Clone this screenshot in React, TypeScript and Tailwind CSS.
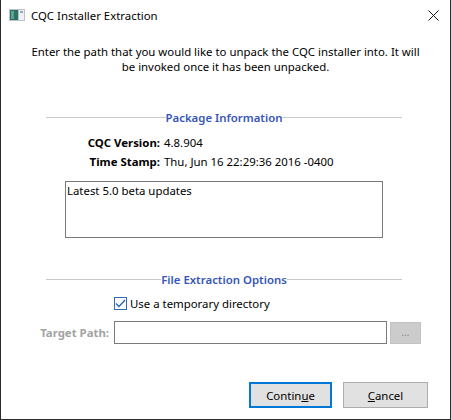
export default function App() {
  return (
    <div className="w-[451px] h-[420px] bg-white border-x border-b border-[#2b2b2b] flex flex-col font-['Noto_Sans',sans-serif] text-[11.4px] text-black leading-[15px]">
      {/* title bar */}
      <div className="h-[30px] flex items-center pl-[8px] pr-[11px]">
        <svg width="16" height="12" viewBox="0 0 16 12" className="mr-[6px]">
          <rect x="0" y="0" width="16" height="12" fill="#b9c2c6" />
          <rect x="1" y="1" width="8" height="10" fill="#2f6f66" />
          <rect x="2" y="2" width="3" height="8" fill="#5aa391" />
          <rect x="10" y="1" width="5" height="10" fill="#eef1f2" />
          <rect x="11" y="2" width="3" height="2" fill="#9aa6ac" />
        </svg>
        <span>CQC Installer Extraction</span>
        <svg width="11" height="11" viewBox="0 0 11 11" className="ml-auto">
          <path d="M0.5 0.5 L10.5 10.5 M10.5 0.5 L0.5 10.5" stroke="#111" strokeWidth="1" />
        </svg>
      </div>

      {/* intro */}
      <p className="mt-[14px] text-center leading-[15px]">
        Enter the path that you would like to unpack the CQC installer into. It will
        <br />
        be invoked once it has been unpacked.
      </p>

      {/* package information */}
      <div className="mt-[35px] ml-[45px] w-[356px] flex items-center h-[16px]">
        <div className="flex-1 h-px bg-[#c9c9c9]" />
        <span className="font-semibold text-[#3556b8]">Package Information</span>
        <div className="flex-1 h-px bg-[#c9c9c9]" />
      </div>

      <div className="mt-[8px] grid grid-cols-[159px_1fr] gap-x-[4px]">
        <div className="h-[19px] flex items-center justify-end font-bold">CQC Version:</div>
        <div className="h-[19px] flex items-center">4.8.904</div>
        <div className="h-[19px] flex items-center justify-end font-bold">Time Stamp:</div>
        <div className="h-[19px] flex items-center">Thu, Jun 16 22:29:36 2016 -0400</div>
      </div>

      <div className="mt-[10px] ml-[64px] w-[318px] h-[57px] border border-[#7a7a7a] px-[1px] pt-[1px]">
        Latest 5.0 beta updates
      </div>

      {/* file extraction options */}
      <div className="mt-[33px] ml-[45px] w-[356px] flex items-center h-[16px]">
        <div className="flex-1 h-px bg-[#c9c9c9]" />
        <span className="font-semibold text-[#3556b8]">File Extraction Options</span>
        <div className="flex-1 h-px bg-[#c9c9c9]" />
      </div>

      <div className="mt-[8px] ml-[113px] h-[16px] flex items-center gap-[3px]">
        <div className="w-[13px] h-[13px] border border-[#2f6fb8] flex items-center justify-center">
          <svg width="11" height="9" viewBox="0 0 11 9">
            <path d="M1 4.5 L4 7.5 L10 1" stroke="#2466b5" strokeWidth="1.3" fill="none" />
          </svg>
        </div>
        <span>Use a temporary directory</span>
      </div>

      <div className="mt-[10px] flex items-center h-[23px]">
        <span className="w-[108px] text-right font-bold text-[#a3a3a3]">Target Path:</span>
        <div className="ml-[5px] w-[273px] h-[23px] border border-[#7a7a7a]" />
        <div className="ml-[3px] w-[31px] h-[22px] bg-[#cccccc] border border-[#c2c2c2] flex items-center justify-center text-[#8a8a8a] text-[10px]">
          ...
        </div>
      </div>

      {/* buttons */}
      <div className="mt-[38px] flex justify-end gap-[11px] pr-[22px]">
        <button className="w-[83px] h-[26px] bg-[#e1e1e1] border-2 border-[#0078d7]">
          Contin<span className="underline">u</span>e
        </button>
        <button className="w-[85px] h-[26px] bg-[#e1e1e1] border border-[#adadad]">
          <span className="underline">C</span>ancel
        </button>
      </div>
    </div>
  );
}
